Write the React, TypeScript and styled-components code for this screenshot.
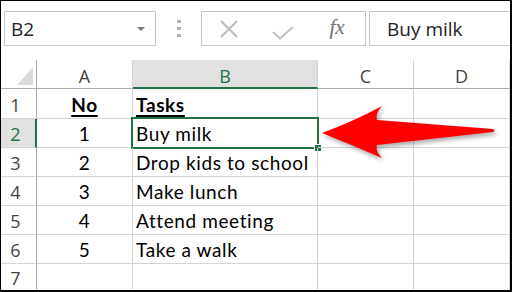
import React from "react";
import styled, { createGlobalStyle } from "styled-components";

const Global = createGlobalStyle`
  html, body { margin: 0; padding: 0; background: #ffffff; }
  body { width: 512px; height: 292px; overflow: hidden; }
`;

const GREEN = "#217346";

const Frame = styled.div`
  position: relative;
  width: 512px;
  height: 292px;
  box-sizing: border-box;
  border-style: solid;
  border-color: #000;
  border-width: 1px 2px 2px 1px;
  background: #fff;
  display: flex;
  flex-direction: column;
  overflow: hidden;
`;

const Toolbar = styled.div`
  height: 59px;
  flex: none;
  display: flex;
  align-items: flex-start;
  padding: 10px 0 0 3px;
  box-sizing: border-box;
`;

const NameBox = styled.div`
  width: 152px;
  height: 35px;
  box-sizing: border-box;
  border: 1px solid #c6c6c6;
  display: flex;
  align-items: center;
  padding-left: 6px;
  font-family: "Open Sans", sans-serif;
  font-size: 19px;
  color: #222;
`;

const DropArrow = styled.span`
  margin-left: auto;
  margin-right: 10px;
  width: 0;
  height: 0;
  border-left: 4px solid transparent;
  border-right: 4px solid transparent;
  border-top: 4px solid #777;
`;

const Dots = styled.div`
  margin: 9px 0 0 21px;
  display: flex;
  flex-direction: column;
  gap: 4px;
  width: 4px;
`;

const Dot = styled.span`
  width: 4px;
  height: 3px;
  background: #b4b4b4;
`;

const FormulaButtons = styled.div`
  margin-left: 20px;
  width: 165px;
  height: 35px;
  box-sizing: border-box;
  border: 1px solid #c6c6c6;
  display: flex;
  align-items: center;
`;

const ButtonSlot = styled.div`
  width: 54px;
  display: flex;
  justify-content: center;
  align-items: center;
`;

const Fx = styled.span`
  font-family: "Liberation Serif", serif;
  font-style: italic;
  font-size: 21px;
  color: #707070;
  margin-top: -2px;
`;

const FormulaInput = styled.div`
  margin-left: 3px;
  flex: 1;
  height: 35px;
  box-sizing: border-box;
  border: 1px solid #c6c6c6;
  border-right: none;
  display: flex;
  align-items: center;
  padding-left: 17px;
  font-family: "Open Sans", sans-serif;
  font-size: 19px;
  color: #222;
`;

const Sheet = styled.div`
  flex: 1;
  display: grid;
  grid-template-columns: 36px 96px 185px 96px 1fr;
  grid-template-rows: 29px 30px repeat(5, 29px) 1fr;
`;

const Corner = styled.div`
  position: relative;
  box-sizing: border-box;
  border-right: 1px solid #ababab;
  border-bottom: 1px solid #ababab;
  &::after {
    content: "";
    position: absolute;
    right: 3px;
    bottom: 3px;
    width: 0;
    height: 0;
    border-left: 16px solid transparent;
    border-bottom: 18px solid #dcdcdc;
  }
`;

const ColHeader = styled.div<{ $active?: boolean }>`
  box-sizing: border-box;
  border-right: 1px solid #d4d4d4;
  border-bottom: ${(p) => (p.$active ? `2px solid ${GREEN}` : "1px solid #ababab")};
  background: ${(p) => (p.$active ? "#e1e1e1" : "#fff")};
  color: ${(p) => (p.$active ? GREEN : "#444")};
  display: flex;
  align-items: center;
  justify-content: center;
  padding-top: ${(p) => (p.$active ? "5px" : "4px")};
  font-family: "Open Sans", sans-serif;
  font-size: 18px;
`;

const RowHeader = styled.div<{ $active?: boolean }>`
  box-sizing: border-box;
  border-bottom: 1px solid #d4d4d4;
  border-right: ${(p) => (p.$active ? `2px solid ${GREEN}` : "1px solid #ababab")};
  background: ${(p) => (p.$active ? "#e1e1e1" : "#fff")};
  color: ${(p) => (p.$active ? GREEN : "#444")};
  display: flex;
  align-items: center;
  justify-content: center;
  padding-right: ${(p) => (p.$active ? "5px" : "6px")};
  padding-top: 2px;
  font-family: "Open Sans", sans-serif;
  font-size: 18px;
`;

const Cell = styled.div<{ $align?: "left" | "center"; $bold?: boolean }>`
  position: relative;
  box-sizing: border-box;
  border-right: 1px solid #d4d4d4;
  border-bottom: 1px solid #d4d4d4;
  display: flex;
  align-items: center;
  justify-content: ${(p) => (p.$align === "center" ? "center" : "flex-start")};
  padding-left: ${(p) => (p.$align === "center" ? "0" : "3px")};
  padding-top: 1px;
  font-family: "Lato", sans-serif;
  font-size: 19px;
  letter-spacing: 0.6px;
  font-weight: ${(p) => (p.$bold ? 700 : 400)};
  text-decoration: ${(p) => (p.$bold ? "underline" : "none")};
  text-decoration-thickness: 2px;
  text-underline-offset: 3px;
  color: #000;
  white-space: nowrap;
`;

const Selection = styled.div`
  position: absolute;
  left: -2px;
  top: -2px;
  right: -2px;
  bottom: -2px;
  box-sizing: border-box;
  border: 2px solid ${GREEN};
  pointer-events: none;
`;

const FillHandle = styled.span`
  position: absolute;
  right: -5px;
  bottom: -5px;
  width: 6px;
  height: 6px;
  background: ${GREEN};
  border: 1px solid #fff;
`;

const ArrowLayer = styled.svg`
  position: absolute;
  left: -1px;
  top: -1px;
  width: 512px;
  height: 292px;
  pointer-events: none;
  filter: drop-shadow(2px 3px 2px rgba(0, 0, 0, 0.32));
`;

const cols = ["A", "B", "C", "D"];
const rows: { no: string; task: string; head?: boolean }[] = [
  { no: "No", task: "Tasks", head: true },
  { no: "1", task: "Buy milk" },
  { no: "2", task: "Drop kids to school" },
  { no: "3", task: "Make lunch" },
  { no: "4", task: "Attend meeting" },
  { no: "5", task: "Take a walk" },
  { no: "", task: "" },
];

export default function App() {
  return (
    <>
      <Global />
      <Frame>
        <Toolbar>
          <NameBox>
            B2
            <DropArrow />
          </NameBox>
          <Dots>
            <Dot />
            <Dot />
            <Dot />
          </Dots>
          <FormulaButtons>
            <ButtonSlot>
              <svg width="18" height="18" viewBox="0 0 18 18">
                <path d="M1 1 L17 17 M17 1 L1 17" stroke="#bdbdbd" strokeWidth="2" fill="none" />
              </svg>
            </ButtonSlot>
            <ButtonSlot>
              <svg width="22" height="14" viewBox="0 0 22 14" style={{ marginTop: 8 }}>
                <path d="M1 6 L8 12.5 L21 1" stroke="#c4c4c4" strokeWidth="2.2" fill="none" />
              </svg>
            </ButtonSlot>
            <ButtonSlot>
              <Fx>fx</Fx>
            </ButtonSlot>
          </FormulaButtons>
          <FormulaInput>Buy milk</FormulaInput>
        </Toolbar>
        <Sheet>
          <Corner />
          {cols.map((c) => (
            <ColHeader key={c} $active={c === "B"}>
              {c}
            </ColHeader>
          ))}
          {rows.map((r, i) => (
            <React.Fragment key={i}>
              <RowHeader $active={i === 1}>{i + 1}</RowHeader>
              <Cell $align="center" $bold={r.head}>
                {r.no}
              </Cell>
              <Cell $align="left" $bold={r.head}>
                {r.task}
                {i === 1 && (
                  <Selection>
                    <FillHandle />
                  </Selection>
                )}
              </Cell>
              <Cell />
              <Cell />
            </React.Fragment>
          ))}
        </Sheet>
        <ArrowLayer viewBox="0 0 512 292">
          <path
            d="M322 133 Q352 122 382 106 Q375 114 377 120 L493 129 Q496 130.5 493 132 L377 145 Q375 151 382 158 Q352 145 322 133 Z"
            fill="#ff0000"
          />
        </ArrowLayer>
      </Frame>
    </>
  );
}
